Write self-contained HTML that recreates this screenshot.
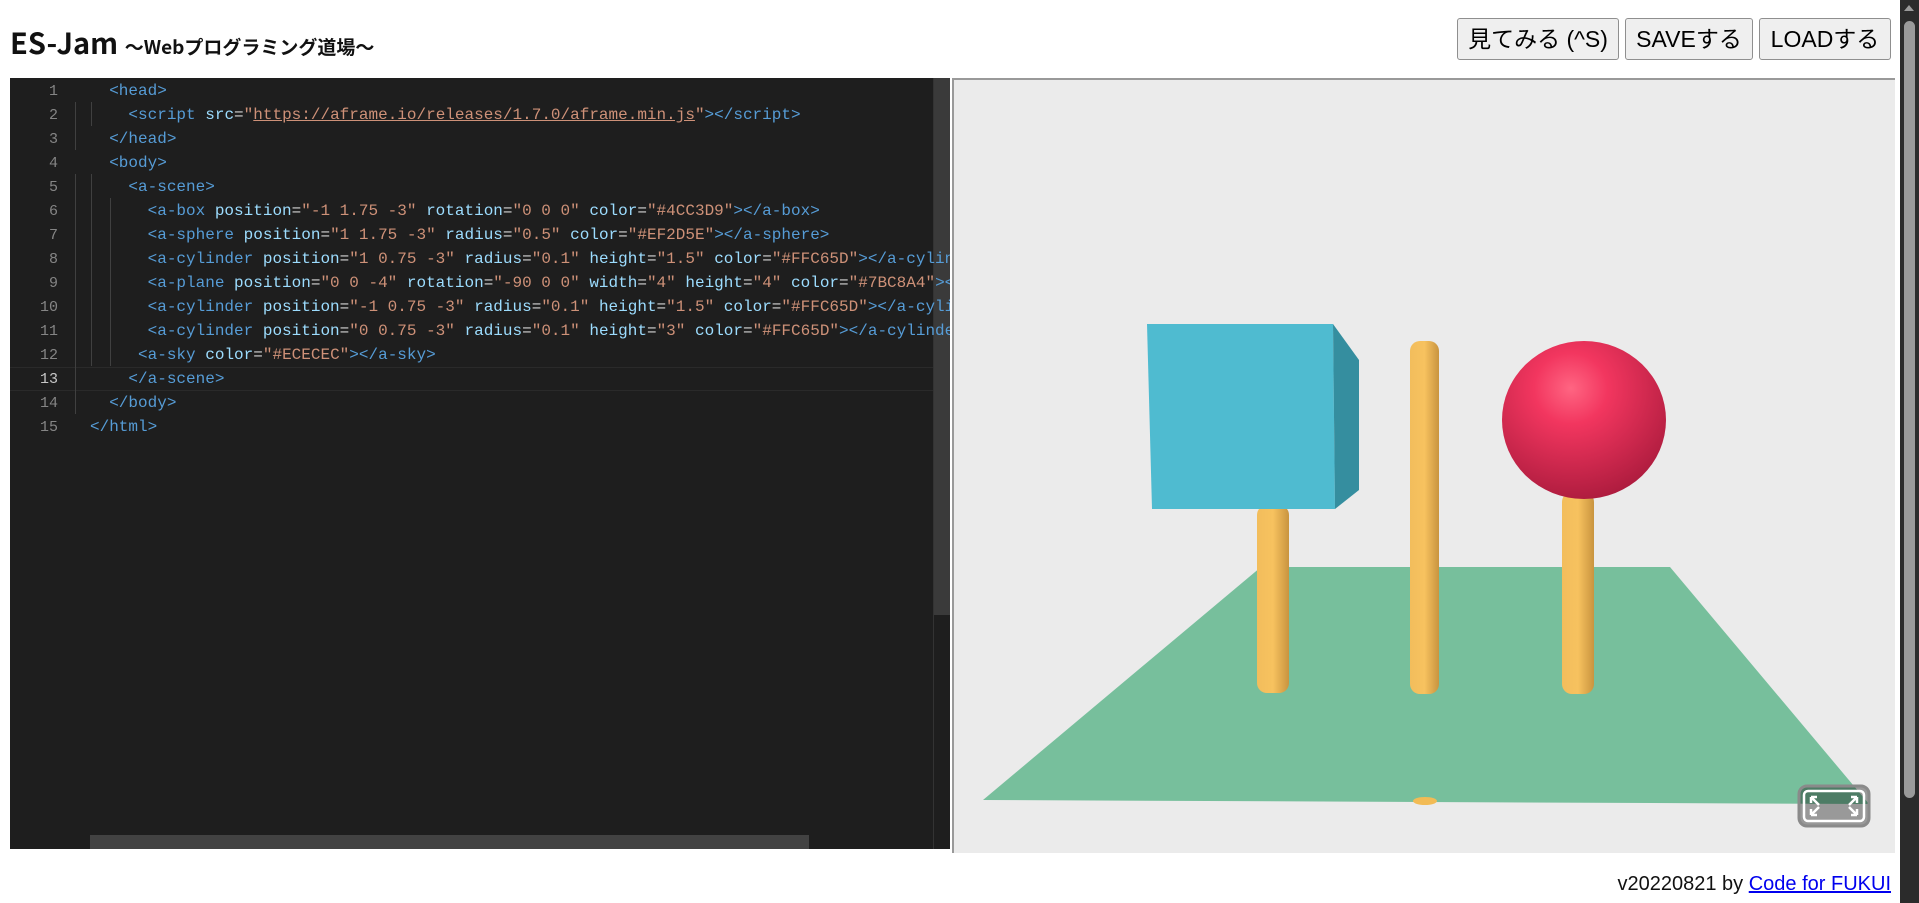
<!DOCTYPE html>
<html><head><meta charset="utf-8"><style>
*{box-sizing:border-box;margin:0;padding:0}
body{width:1919px;height:903px;background:#fff;position:relative;overflow:hidden;font-family:"Liberation Sans","Noto Sans CJK JP",sans-serif}
.title{position:absolute;left:10px;top:22px;font-family:"Noto Sans CJK JP","Liberation Sans",sans-serif;font-weight:bold;font-size:29px;color:#111;line-height:40px}
.title small{font-size:19px}
.btn{position:absolute;top:18px;height:42px;border:1px solid #8f8f8f;border-radius:3px;background:#efefef;font-size:23px;color:#000;text-align:center;line-height:40px;font-family:"Liberation Sans","Noto Sans CJK JP",sans-serif}
#ed{position:absolute;left:10px;top:78px;width:940px;height:771px;background:#1e1e1e;overflow:hidden}
.ln{position:absolute;left:0;width:48px;text-align:right;color:#858585;font-family:"Liberation Mono",monospace;font-size:15px}
.code{position:absolute;left:80px;white-space:pre;font-family:"Liberation Mono",monospace;font-size:16px;color:#d4d4d4}
.t{color:#569cd6}.a{color:#9cdcfe}.s{color:#ce9178}.p{color:#808080}
#pv{position:absolute;left:952px;top:78px;width:943px;height:775px;background:#ebebeb;border-top:2px solid #999;border-left:2px solid #999}
</style></head><body>
<div class="title">ES-Jam <small>～Webプログラミング道場～</small></div>
<div class="btn" style="left:1457px;width:162px">見てみる (^S)</div>
<div class="btn" style="left:1625px;width:128px">SAVEする</div>
<div class="btn" style="left:1759px;width:132px">LOADする</div>
<div style="position:absolute;left:1900px;top:0;width:19px;height:903px;background:#2b2b2b"></div>
<div style="position:absolute;left:1904px;top:21px;width:11px;height:86%;background:#9a9a9a;border-radius:6px"></div>
<div style="position:absolute;left:1904px;top:5px;width:0;height:0;border-left:5px solid transparent;border-right:5px solid transparent;border-bottom:6px solid #9a9a9a"></div>

<div id="ed">
<div style="position:absolute;left:0;top:289px;width:940px;height:24px;border-top:1px solid #2a2a2a;border-bottom:1px solid #2a2a2a"></div>
<div style="position:absolute;left:923px;top:0;width:17px;height:537px;background:#3a3a3a"></div>
<div style="position:absolute;left:923px;top:0;width:1px;height:771px;background:#333"></div>
<div style="position:absolute;left:80px;top:757px;width:719px;height:14px;background:#424242"></div>
<div style="position:absolute;left:81px;top:24px;width:1px;height:24px;background:#404040"></div>
<div style="position:absolute;left:81px;top:96px;width:1px;height:192px;background:#404040"></div>
<div style="position:absolute;left:100px;top:120px;width:1px;height:168px;background:#404040"></div>
<div style="position:absolute;left:65px;top:96px;width:1px;height:216px;background:#404040"></div>
<div style="position:absolute;left:65px;top:24px;width:1px;height:48px;background:#404040"></div>
<div style="position:absolute;left:65px;top:312px;width:1px;height:24px;background:#404040"></div>
<div class="ln" style="top:2px;line-height:24px">1<br>2<br>3<br>4<br>5<br>6<br>7<br>8<br>9<br>10<br>11<br>12<br><span style="color:#c6c6c6">13</span><br>14<br>15</div>
<div class="code" style="top:1px;line-height:24px">  <span class="t">&lt;head&gt;</span>
    <span class="t">&lt;script</span> <span class="a">src</span>=<span class="s">"<u>https://aframe.io/releases/1.7.0/aframe.min.js</u>"</span><span class="t">&gt;&lt;/script&gt;</span>
  <span class="t">&lt;/head&gt;</span>
  <span class="t">&lt;body&gt;</span>
    <span class="t">&lt;a-scene&gt;</span>
      <span class="t">&lt;a-box</span> <span class="a">position</span>=<span class="s">"-1 1.75 -3"</span> <span class="a">rotation</span>=<span class="s">"0 0 0"</span> <span class="a">color</span>=<span class="s">"#4CC3D9"</span><span class="t">&gt;&lt;/a-box&gt;</span>
      <span class="t">&lt;a-sphere</span> <span class="a">position</span>=<span class="s">"1 1.75 -3"</span> <span class="a">radius</span>=<span class="s">"0.5"</span> <span class="a">color</span>=<span class="s">"#EF2D5E"</span><span class="t">&gt;&lt;/a-sphere&gt;</span>
      <span class="t">&lt;a-cylinder</span> <span class="a">position</span>=<span class="s">"1 0.75 -3"</span> <span class="a">radius</span>=<span class="s">"0.1"</span> <span class="a">height</span>=<span class="s">"1.5"</span> <span class="a">color</span>=<span class="s">"#FFC65D"</span><span class="t">&gt;&lt;/a-cylinder&gt;</span>
      <span class="t">&lt;a-plane</span> <span class="a">position</span>=<span class="s">"0 0 -4"</span> <span class="a">rotation</span>=<span class="s">"-90 0 0"</span> <span class="a">width</span>=<span class="s">"4"</span> <span class="a">height</span>=<span class="s">"4"</span> <span class="a">color</span>=<span class="s">"#7BC8A4"</span><span class="t">&gt;&lt;/a-plane&gt;</span>
      <span class="t">&lt;a-cylinder</span> <span class="a">position</span>=<span class="s">"-1 0.75 -3"</span> <span class="a">radius</span>=<span class="s">"0.1"</span> <span class="a">height</span>=<span class="s">"1.5"</span> <span class="a">color</span>=<span class="s">"#FFC65D"</span><span class="t">&gt;&lt;/a-cylinder&gt;</span>
      <span class="t">&lt;a-cylinder</span> <span class="a">position</span>=<span class="s">"0 0.75 -3"</span> <span class="a">radius</span>=<span class="s">"0.1"</span> <span class="a">height</span>=<span class="s">"3"</span> <span class="a">color</span>=<span class="s">"#FFC65D"</span><span class="t">&gt;&lt;/a-cylinder&gt;</span>
     <span class="t">&lt;a-sky</span> <span class="a">color</span>=<span class="s">"#ECECEC"</span><span class="t">&gt;&lt;/a-sky&gt;</span>
    <span class="t">&lt;/a-scene&gt;</span>
  <span class="t">&lt;/body&gt;</span>
<span class="t">&lt;/html&gt;</span></div>
</div>

<div id="pv"></div>
<svg style="position:absolute;left:0;top:0" width="1919" height="903">
<defs>
<linearGradient id="cy" x1="0" x2="1"><stop offset="0" stop-color="#f2bd5c"/><stop offset=".5" stop-color="#f7c25f"/><stop offset="1" stop-color="#c9943f"/></linearGradient>
<radialGradient id="sp" cx=".42" cy=".3" r=".75"><stop offset="0" stop-color="#ff6582"/><stop offset=".3" stop-color="#f2365f"/><stop offset="1" stop-color="#a91a3c"/></radialGradient>
</defs>
<polygon points="983,800 1869,804 1670,567 1261,567" fill="#77bf9c"/>
<rect x="1257" y="505" width="32" height="188" rx="10" fill="url(#cy)"/>
<rect x="1410" y="341" width="29" height="353" rx="10" fill="url(#cy)"/>
<rect x="1562" y="492" width="32" height="202" rx="10" fill="url(#cy)"/>
<ellipse cx="1425" cy="801" rx="12" ry="4" fill="#f2bb55"/>
<polygon points="1147,324 1333,324 1335,509 1152,509" fill="#4fbbd0"/>
<polygon points="1333,324 1359,360 1359,490 1335,509" fill="#358e9f"/>
<ellipse cx="1584" cy="420" rx="82" ry="79" fill="url(#sp)"/>
<rect x="1799" y="786" width="70" height="40" rx="8" fill="rgba(0,0,0,0.35)" stroke="#8a8a8a" stroke-width="3"/>
<rect x="1804" y="791" width="60" height="30" rx="4" fill="none" stroke="#fff" stroke-width="2.5"/>
<g stroke="#fff" stroke-width="2.5" fill="none"><path d="M1811 797l8 8M1811 797h6M1811 797v6M1857 797l-8 8M1857 797h-6M1857 797v6M1811 815l8-8M1811 815h6M1811 815v-6M1857 815l-8-8M1857 815h-6M1857 815v-6"/></g>
</svg>
<div style="position:absolute;right:28px;top:872px;font-family:'Liberation Sans','Noto Sans CJK JP',sans-serif;font-size:20px;color:#111;line-height:24px">v20220821 by <span style="color:#00e;text-decoration:underline">Code for FUKUI</span></div>
</body></html>
